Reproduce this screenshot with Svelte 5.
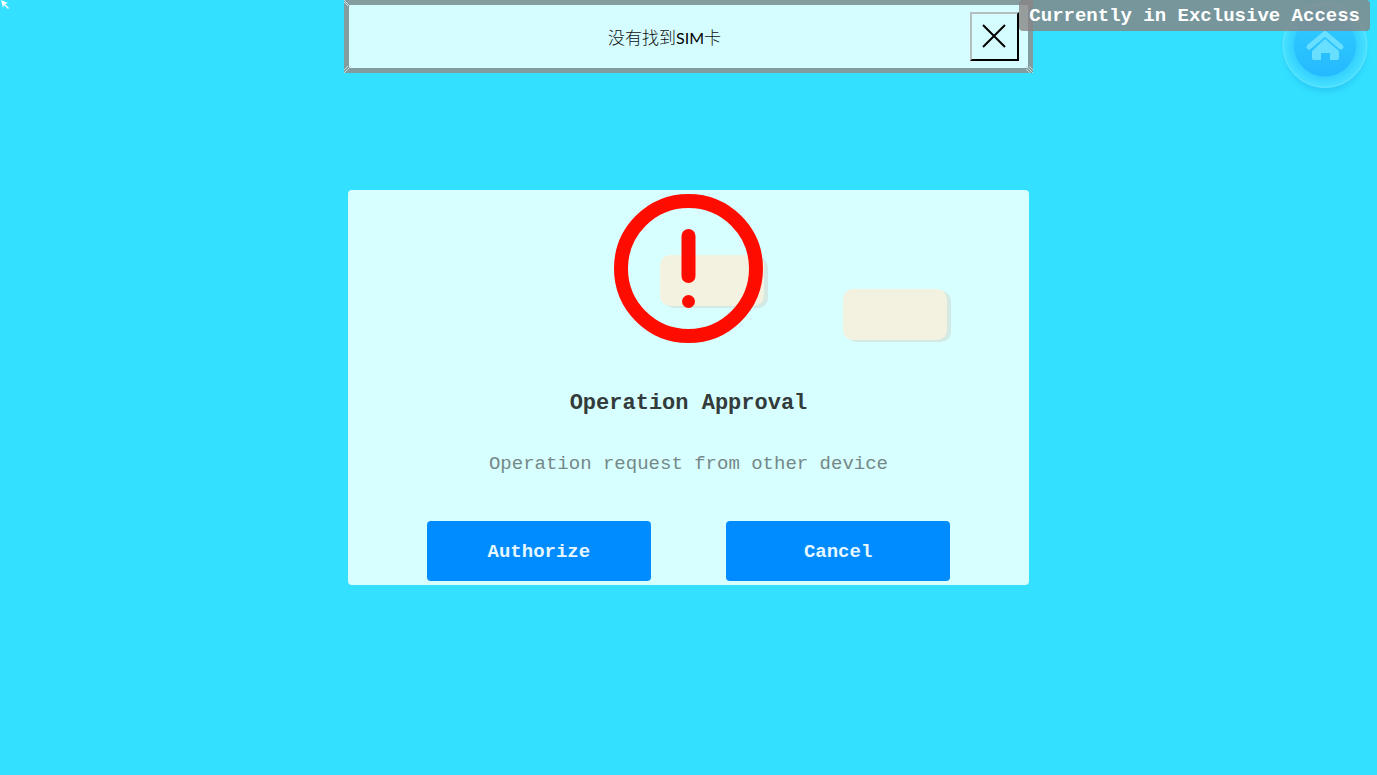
<script>
  let showNotice = true;
  let showApproval = true;

  const closeNotice = () => showNotice = false;
  const answer = () => showApproval = false;
</script>

<style>
    :global(body) {
        background: #33e0ff;
    }

    .page {
        display: grid;
        grid-template-rows: 73px 1fr 73px;
        justify-items: center;
        align-items: center;
        min-height: 100vh;
        position: relative;
        overflow: hidden;
        font-family: "Liberation Mono", monospace;
    }

    .notice {
        display: flex;
        align-items: center;
        box-sizing: border-box;
        width: 50%;
        height: 73px;
        padding: 0 9px 1px 0;
        border: 5px solid #839d9e;
        position: relative;
        background: #d5fdff;
    }

    .notice p {
        flex: 1;
        margin: 0;
        padding-left: 10px;
        text-align: center;
        font: 17px "Open Sans", "Noto Sans CJK SC", sans-serif;
        font-weight: 300;
        color: #111;
    }

    .sim {
        font: 16px Lato, sans-serif;
        color: #000;
    }

    .corner {
        position: absolute;
        width: 7px;
        height: 7px;
        stroke: #c5dcdd;
        stroke-width: 1;
        fill: none;
    }

    .top-left {
        top: -5px;
        left: -5px;
    }

    .bottom-left {
        bottom: -5px;
        left: -5px;
    }

    .bottom-right {
        right: -5px;
        bottom: -5px;
    }

    .close {
        display: flex;
        align-items: center;
        justify-content: center;
        width: 49px;
        height: 49px;
        padding: 0;
        border: 2px solid #000;
        border-top-color: #b5bebe;
        border-left-color: #b5bebe;
        background: transparent;
    }

    .close svg {
        width: 26px;
        height: 26px;
        stroke: #000;
        stroke-width: 2;
    }

    .home {
        position: absolute;
        top: 0;
        right: 4px;
        padding: 0;
        border: 0;
        background: transparent;
    }

    .home svg {
        display: block;
        width: 96px;
        height: 100px;
    }

    .status {
        position: absolute;
        top: 0;
        right: 7px;
        box-sizing: border-box;
        height: 31px;
        padding: 1px 10px 0;
        border-radius: 4px;
        background: rgba(135, 131, 131, .8);
        color: #fff;
        font-size: 19px;
        font-weight: bold;
        line-height: 31px;
        white-space: nowrap;
    }

    .dialog {
        grid-row: 2;
        box-sizing: border-box;
        display: flex;
        flex-direction: column;
        align-items: center;
        position: relative;
        width: 49.4%;
        padding: 4px 0;
        border-radius: 4px;
        background: #d8ffff;
    }

    .warning {
        position: relative;
        width: 150px;
        height: 150px;
    }

    .key {
        position: absolute;
        width: 104px;
        height: 51px;
        border-radius: 10px;
        background: #f3f1df;
        box-shadow: 4px 2px 0 #d3e9e3;
    }

    .key-left {
        top: 65px;
        left: 312px;
    }

    .key-right {
        top: 99px;
        left: 495px;
    }

    h1 {
        margin: 44px 0 0;
        font-size: 22px;
        line-height: 32px;
        color: #333b3b;
    }

    .message {
        margin: 28px 0 0;
        font-size: 19px;
        line-height: 32px;
        color: #758888;
    }

    .buttons {
        display: flex;
        justify-content: center;
        gap: 11%;
        align-self: stretch;
        margin-top: 41px;
    }

    .buttons button {
        flex-basis: 33%;
        height: 60px;
        padding: 2px 0 0;
        border: 0;
        border-radius: 4px;
        background: #008cff;
        color: #e6f7ff;
        font: bold 19px "Liberation Mono", monospace;
    }

    .pointer {
        position: absolute;
        top: 0;
        left: 0;
        width: 10px;
        height: 10px;
    }
</style>

<div class="page">
    {#if showNotice}
    <div class="notice" role="status">
        <svg class="corner top-left" viewBox="0 0 7 7"><path d="M0 0L6 6M0 2L4 6" /></svg>
        <svg class="corner bottom-left" viewBox="0 0 7 7"><path d="M0 7L7 0M0 4L4 0" /></svg>
        <svg class="corner bottom-right" viewBox="0 0 7 7"><path d="M0 0L7 7M3 0L7 4M0 3L4 7" /></svg>
        <p>没有找到<span class="sim">SIM</span>卡</p>
        <button class="close" aria-label="关闭" on:click={closeNotice}>
            <svg viewBox="0 0 26 26"><path d="M2 2L24 24M24 2L2 24" /></svg>
        </button>
    </div>
    {/if}

    {#if showApproval}
    <div class="dialog" role="dialog" aria-labelledby="approval-title">
        <span class="key key-left"></span>
        <span class="key key-right"></span>
        <svg class="warning" viewBox="0 0 150 150">
            <circle cx="75.5" cy="74.5" r="67.5" fill="none" stroke="#ff0c00" stroke-width="14" />
            <path d="M75.5 42V82" stroke="#ff0c00" stroke-width="14" stroke-linecap="round" />
            <circle cx="75.5" cy="107.5" r="6.5" fill="#ff0c00" />
        </svg>
        <h1 id="approval-title">Operation Approval</h1>
        <p class="message">Operation request from other device</p>
        <div class="buttons">
            <button on:click={answer}>Authorize</button>
            <button on:click={answer}>Cancel</button>
        </div>
    </div>
    {/if}

    <button class="home" aria-label="Home">
        <svg viewBox="0 0 96 100">
            <defs>
                <radialGradient id="shade">
                    <stop offset=".8" stop-color="#22bdf0" stop-opacity=".5" />
                    <stop offset="1" stop-color="#33e0ff" stop-opacity="0" />
                </radialGradient>
                <radialGradient id="ring">
                    <stop offset=".72" stop-color="#33ceff" />
                    <stop offset="1" stop-color="#48e2ff" />
                </radialGradient>
                <linearGradient id="disc" x1="0" y1="0" x2="0" y2="1">
                    <stop offset="0" stop-color="#30ccff" />
                    <stop offset="1" stop-color="#25b9ff" />
                </linearGradient>
            </defs>
            <circle cx="48" cy="52" r="47" fill="url(#shade)" />
            <circle cx="48" cy="45.5" r="42" fill="url(#ring)" stroke="#67e5ff" />
            <circle cx="48" cy="45.5" r="31" fill="url(#disc)" />
            <path d="M32 47L48 33.5L64 47" fill="none" stroke="#69dfff" stroke-width="5" stroke-linecap="round" />
            <path d="M48 39L62 51V58Q62 60 60 60H53V53H44V60H37Q35 60 35 58V51Z" fill="#69dfff" />
        </svg>
    </button>
    <div class="status">Currently in Exclusive Access</div>

    <svg class="pointer" viewBox="0 0 10 10"><path d="M1 0L8 3L5 4L9 8L8 9L4 5L3 8Z" fill="#fff" /></svg>
</div>
